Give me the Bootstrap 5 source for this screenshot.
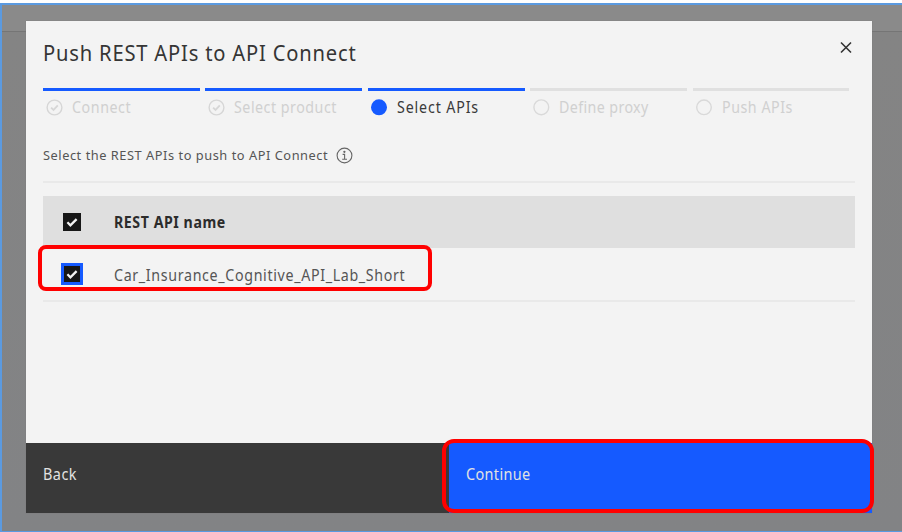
<!DOCTYPE html>
<html lang="en">
<head>
<meta charset="utf-8">
<meta name="viewport" content="width=device-width, initial-scale=1">
<title>Push REST APIs to API Connect</title>
<link href="https://cdn.jsdelivr.net/npm/bootstrap@5.3.0/dist/css/bootstrap.min.css" rel="stylesheet">
<style>
body{font-family:"Noto Sans",sans-serif;background:#fff;color:#3d3d3d;height:532px;overflow:hidden}
.backdrop-page{height:529px;margin-top:3px;border:solid #5b9ae0;border-width:2px 0 1px 2px;background:linear-gradient(#8a8a8a 26px,#757575 26px,#757575 27px,#848484 27px,#828385 100%);padding:16px 30px 0 24px}
.dialog-box{width:846px;height:492px;background:#f3f3f3;box-shadow:0 0 1px #777}
.dialog-main{height:422px;padding:17px 17px 0}
.fit{display:inline-block;transform-origin:0 50%;white-space:nowrap;transform:scaleX(.88)}
.dialog-heading{font-size:22.4px;line-height:30px;height:50px;font-weight:400;color:#353535;margin:0}
.close-x{margin:3px 2px 0 0;width:14px;height:14px}
.steps{gap:5.4px;padding-right:5.5px;height:52px}
.step{flex:1 1 0;border-top:3px solid #e0e0e0;color:#d0d0d0;font-size:16.2px;line-height:24px;padding:4px 0 0 3px}
.step svg{width:17px;height:17px;margin-right:9px;flex:none}
.step.done{border-color:#155aff}
.step.current{color:#3a3a3a}
.intro{height:43px;border-bottom:2px solid #e9e9e9;font-size:12.8px;line-height:16px;padding-top:7px;color:#555}
.head-row{height:52px;margin-top:13px;background:#dfdfdf;font-weight:700;font-size:15.4px;color:#2c2c2c;padding-left:20px}
.item-row{height:54px;border-bottom:2px solid #e9e9e9;font-size:16.2px;color:#555;padding-left:20px;position:relative}
.head-row .fit,.item-row .fit{padding-top:2px}
.tick{width:18px;height:18px;background:#171717;margin-right:33px;flex:none}
.tick svg{display:block;width:18px;height:18px}
.tick.focused{width:22px;height:22px;background:#155aff;padding:3px;margin:0 31px 0 -2px}
.tick.focused svg{width:16px;height:16px;background:#171717}
.callout{position:absolute;border:4px solid #ff0000;border-radius:8px;pointer-events:none}
.callout-row{left:-5px;top:-3px;width:394px;height:46px}
.foot{height:70px}
.foot .btn{border:0;border-radius:0;text-align:left;color:#e2e2e2;font-size:16.4px;line-height:24px;padding:0 0 8px 17px;position:relative}
.back-btn,.back-btn:hover{background:#393939!important}
.next-btn,.next-btn:hover{background:#155aff!important}
.callout-next{left:-7px;top:-4px;width:432px;height:74px;border-radius:12px}
.s-title{transform:scaleX(.9);letter-spacing:.9px}
.s-1{letter-spacing:.65px}
.s-2{letter-spacing:.58px}
.s-3{letter-spacing:.97px}
.s-4{letter-spacing:.44px}
.s-5{letter-spacing:.6px}
.s-intro{transform:none;letter-spacing:.54px}
.s-head{transform:scaleX(.92);letter-spacing:.6px}
.s-item{letter-spacing:.75px}
.s-back{letter-spacing:.55px}
.s-next{letter-spacing:.41px}
</style>
<script src="https://cdn.jsdelivr.net/npm/bootstrap@5.3.0/dist/js/bootstrap.bundle.min.js" defer></script>
</head>
<body>
<div class="backdrop-page">
 <div class="dialog-box" role="dialog">
  <div class="dialog-main">
   <div class="d-flex justify-content-between align-items-start">
    <h1 class="dialog-heading"><span class="fit s-title">Push REST APIs to API Connect</span></h1>
    <svg class="close-x" viewBox="0 0 14 14" stroke="#333" stroke-width="1.6" fill="none"><path d="M2 1.5l10 10M12 1.5L2 11.5"/></svg>
   </div>
   <div class="steps d-flex align-items-start">
    <div class="step done d-flex align-items-center"><svg viewBox="0 0 17 17" fill="none" stroke="#d6d6d6" stroke-width="1.4"><circle cx="8.5" cy="8.5" r="7.4"/><path d="M5.1 8.6l2.4 2.3 4.3-4.5" stroke-width="1.8"/></svg><span class="fit s-1">Connect</span></div>
    <div class="step done d-flex align-items-center"><svg viewBox="0 0 17 17" fill="none" stroke="#d6d6d6" stroke-width="1.4"><circle cx="8.5" cy="8.5" r="7.4"/><path d="M5.1 8.6l2.4 2.3 4.3-4.5" stroke-width="1.8"/></svg><span class="fit s-2">Select product</span></div>
    <div class="step done current d-flex align-items-center"><svg viewBox="0 0 17 17"><circle cx="8" cy="8.3" r="8" fill="#155aff"/></svg><span class="fit s-3">Select APIs</span></div>
    <div class="step d-flex align-items-center"><svg viewBox="0 0 17 17" fill="none" stroke="#d9d9d9" stroke-width="1.4"><circle cx="8.3" cy="8.3" r="7.4"/></svg><span class="fit s-4">Define proxy</span></div>
    <div class="step d-flex align-items-center"><svg viewBox="0 0 17 17" fill="none" stroke="#d9d9d9" stroke-width="1.4"><circle cx="8" cy="8.3" r="7.3"/></svg><span class="fit s-5">Push APIs</span></div>
   </div>
   <div class="intro d-flex align-items-start"><span class="fit s-intro">Select the REST APIs to push to API Connect</span><svg class="ms-2" width="17" height="17" viewBox="0 0 17 17" fill="none" stroke="#666" stroke-width="1.1"><circle cx="8.5" cy="8.5" r="7.4"/><path d="M6.6 7.4h2v4.8M6.2 12.3h4.8"/><circle cx="8.4" cy="4.8" r=".6" fill="#666"/></svg></div>
   <div class="head-row d-flex align-items-center"><span class="tick"><svg viewBox="0 0 18 18" fill="none" stroke="#f3f3f3" stroke-width="2.3"><path d="M4.4 9.3l3 3 6.2-6.2"/></svg></span><span class="fit s-head">REST API name</span></div>
   <div class="item-row d-flex align-items-center"><span class="tick focused"><svg viewBox="0 0 16 16" fill="none" stroke="#f3f3f3" stroke-width="2.3"><path d="M3.4 8.3l3 3 6.2-6.2"/></svg></span><span class="fit s-item">Car_Insurance_Cognitive_API_Lab_Short</span><div class="callout callout-row"></div></div>
  </div>
  <div class="foot d-flex">
   <button class="btn back-btn w-50"><span class="fit s-back">Back</span></button>
   <button class="btn next-btn w-50"><span class="fit s-next">Continue</span><span class="callout callout-next"></span></button>
  </div>
 </div>
</div>
</body>
</html>
